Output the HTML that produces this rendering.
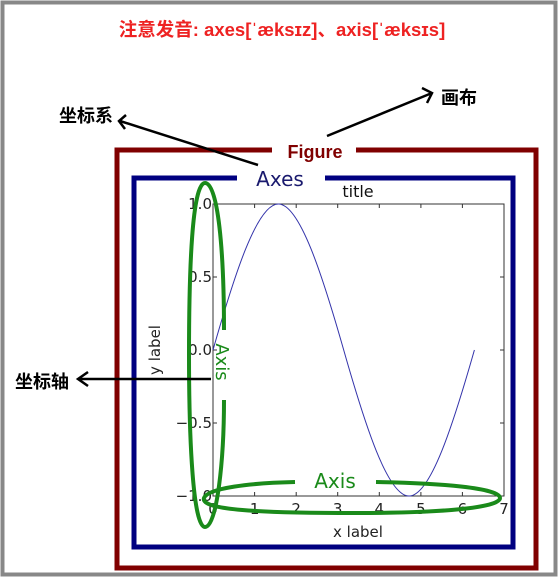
<!DOCTYPE html>
<html><head><meta charset="utf-8"><style>
html,body{margin:0;padding:0;background:#fff;}
svg{display:block}
.cn{font-family:"Liberation Sans","Noto Sans CJK SC",sans-serif;font-weight:bold}
.dv{font-family:"DejaVu Sans",sans-serif}
</style></head><body>
<svg width="558" height="579" viewBox="0 0 558 579" xmlns="http://www.w3.org/2000/svg">
<rect x="0" y="0" width="558" height="579" fill="#fff"/>
<rect x="2.5" y="2.5" width="553" height="572" fill="none" stroke="#888" stroke-width="4"/>
<text x="282" y="36" text-anchor="middle" class="cn" font-size="18.5" fill="#ee2222">注意发音: axes[ˈæksɪz]、axis[ˈæksɪs]</text>
<path d="M272 150 H117 V568 H536 V150 H356" fill="none" stroke="#800000" stroke-width="5"/>
<text x="315" y="158" text-anchor="middle" class="cn" font-size="18" fill="#800000">Figure</text>
<path d="M237 178 H134 V547 H513 V178 H325" fill="none" stroke="#000080" stroke-width="5"/>
<text x="280" y="186" text-anchor="middle" class="dv" font-size="20" fill="#1a1a6e">Axes</text>
<text x="358" y="197" text-anchor="middle" class="dv" font-size="16" fill="#111">title</text>
<rect x="213" y="204" width="291" height="292" fill="none" stroke="#333" stroke-width="1"/>
<g stroke="#333" stroke-width="1">
<path d="M254.6 496v-4M296.2 496v-4M337.7 496v-4M379.3 496v-4M420.9 496v-4M462.4 496v-4M254.6 204v4M296.2 204v4M337.7 204v4M379.3 204v4M420.9 204v4M462.4 204v4"/>
<path d="M213 277h4M213 350h4M213 423h4M504 277h-4M504 350h-4M504 423h-4"/>
</g>
<g class="dv" font-size="15" fill="#222">
<text x="212" y="209" text-anchor="end">1.0</text>
<text x="212" y="282" text-anchor="end">0.5</text>
<text x="212" y="355" text-anchor="end">0.0</text>
<text x="212" y="428" text-anchor="end">−0.5</text>
<text x="212" y="501" text-anchor="end">−1.0</text>
<text x="213" y="514" text-anchor="middle">0</text>
<text x="254.6" y="514" text-anchor="middle">1</text>
<text x="296.2" y="514" text-anchor="middle">2</text>
<text x="337.7" y="514" text-anchor="middle">3</text>
<text x="379.3" y="514" text-anchor="middle">4</text>
<text x="420.9" y="514" text-anchor="middle">5</text>
<text x="462.4" y="514" text-anchor="middle">6</text>
<text x="504" y="514" text-anchor="middle">7</text>
<text x="358" y="537" text-anchor="middle">x label</text>
<text transform="translate(160,350) rotate(-90)" text-anchor="middle">y label</text>
</g>
<path fill="none" stroke="#3333aa" stroke-width="1" d="M213 350 C234.3 275.2 257 204 278.35 204 C299.7 204 322.4 275.2 343.7 350 C365 424.8 387.7 496 409.05 496 C430.4 496 453.1 424.8 474.4 350"/>
<g fill="none" stroke="#1a8a1a" stroke-width="4">
<path d="M224 330 C224 250 218 183 205 183 C192 183 189 270 189 355 C189 440 193 527 205 527 C217 527 224 460 224 400"/>
<path d="M295 482 C250 483 208 488 204 498 C200 510 260 513 355 513 C440 513 500 508 500 498 C500 488 440 483 376 482"/>
</g>
<text transform="translate(216,362) rotate(90)" text-anchor="middle" class="dv" font-size="18" fill="#1a8a1a">Axis</text>
<text x="335" y="488" text-anchor="middle" class="dv" font-size="20" fill="#1a8a1a">Axis</text>
<g stroke="#000" stroke-width="2.5" fill="none">
<path d="M258 165 L120 121 M126 115 L119 121 L125 129"/>
<path d="M327 136 L432 93 M422 88 L432 93 L427 103"/>
<path d="M211 379 L78 379 M88 372 L78 379 L88 386"/>
</g>
<text x="59" y="122" class="cn" font-size="18" fill="#000">坐标系</text>
<text x="441" y="104" class="cn" font-size="18" fill="#000">画布</text>
<text x="15" y="388" class="cn" font-size="18" fill="#000">坐标轴</text>
</svg>
</body></html>
